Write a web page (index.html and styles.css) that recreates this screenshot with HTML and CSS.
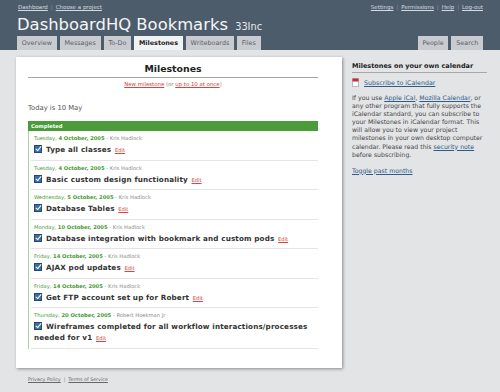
FILE: index.html
```html
<!DOCTYPE html>
<html>
<head>
<meta charset="utf-8">
<link rel="stylesheet" href="styles.css">
</head>
<body>
<div class="header">
  <div class="topbar">
    <div class="crumbs"><a href="#">Dashboard</a><span class="sep">|</span><a href="#">Choose a project</a></div>
    <div class="account"><a href="#">Settings</a><span class="sep">|</span><a href="#">Permissions</a><span class="sep">|</span><a href="#">Help</a><span class="sep">|</span><a href="#">Log-out</a></div>
  </div>
  <h1 class="title">DashboardHQ Bookmarks <span class="company">33Inc</span></h1>
  <div class="tabs">
    <div class="tab-group">
      <a class="tab" href="#">Overview</a>
      <a class="tab" href="#">Messages</a>
      <a class="tab" href="#">To-Do</a>
      <a class="tab active" href="#">Milestones</a>
      <a class="tab" href="#">Writeboards</a>
      <a class="tab" href="#">Files</a>
    </div>
    <div class="tab-group">
      <a class="tab" href="#">People</a>
      <a class="tab" href="#">Search</a>
    </div>
  </div>
</div>

<div class="page">
  <div class="main">
    <h2 class="page-title">Milestones</h2>
    <div class="new-links"><a href="#">New milestone</a> (or <a href="#">up to 10 at once</a>)</div>
    <p class="today">Today is 10 May</p>

    <div class="section-bar">Completed</div>
    <ul class="milestones">
      <li class="ms">
        <div class="ms-date">Tuesday, <b>4 October, 2005</b> <span class="who">- Kris Hadlock</span></div>
        <div class="ms-title"><span class="check"></span>Type all classes <a class="edit" href="#">Edit</a></div>
      </li>
      <li class="ms">
        <div class="ms-date">Tuesday, <b>4 October, 2005</b> <span class="who">- Kris Hadlock</span></div>
        <div class="ms-title"><span class="check"></span>Basic custom design functionality <a class="edit" href="#">Edit</a></div>
      </li>
      <li class="ms">
        <div class="ms-date">Wednesday, <b>5 October, 2005</b> <span class="who">- Kris Hadlock</span></div>
        <div class="ms-title"><span class="check"></span>Database Tables <a class="edit" href="#">Edit</a></div>
      </li>
      <li class="ms">
        <div class="ms-date">Monday, <b>10 October, 2005</b> <span class="who">- Kris Hadlock</span></div>
        <div class="ms-title"><span class="check"></span>Database integration with bookmark and custom pods <a class="edit" href="#">Edit</a></div>
      </li>
      <li class="ms">
        <div class="ms-date">Friday, <b>14 October, 2005</b> <span class="who">- Kris Hadlock</span></div>
        <div class="ms-title"><span class="check"></span>AJAX pod updates <a class="edit" href="#">Edit</a></div>
      </li>
      <li class="ms">
        <div class="ms-date">Friday, <b>14 October, 2005</b> <span class="who">- Kris Hadlock</span></div>
        <div class="ms-title"><span class="check"></span>Get FTP account set up for Robert <a class="edit" href="#">Edit</a></div>
      </li>
      <li class="ms">
        <div class="ms-date">Thursday, <b>20 October, 2005</b> <span class="who">- Robert Hoekman Jr</span></div>
        <div class="ms-title"><span class="check"></span>Wireframes completed for all workflow interactions/processes needed for v1 <a class="edit" href="#">Edit</a></div>
      </li>
    </ul>
  </div>

  <div class="sidebar">
    <h3 class="side-title">Milestones on your own calendar</h3>
    <div class="subscribe">
      <svg class="ical" width="7" height="9" viewBox="0 0 7 9"><rect x="0.5" y="0.5" width="6" height="8" fill="#fff" stroke="#b9b9b9"/><rect x="0.5" y="0.5" width="6" height="3" fill="#c0303a"/></svg>
      <a href="#">Subscribe to iCalendar</a>
    </div>
    <p class="side-text">If you use <a href="#">Apple iCal</a>, <a href="#">Mozilla Calendar</a>, or any other program that fully supports the iCalendar standard, you can subscribe to your Milestones in iCalendar format. This will allow you to view your project milestones in your own desktop computer calendar. Please read this <a href="#">security note</a> before subscribing.</p>
    <p class="side-toggle"><a href="#">Toggle past months</a></p>
  </div>
</div>

<div class="footer"><a href="#">Privacy Policy</a><span class="sep">|</span><a href="#">Terms of Service</a></div>
</body>
</html>
```

FILE: styles.css
```css
html, body {
  margin: 0;
  padding: 0;
}
body {
  background: #e3e4e6;
  font-family: "DejaVu Sans", Verdana, sans-serif;
  color: #333;
  width: 500px;
  height: 392px;
  overflow: hidden;
}
a { color: inherit; }

.header {
  background: #4d5c6b;
  padding: 0 17px;
  height: 50px;
  display: flex;
  flex-direction: column;
}
.topbar {
  display: flex;
  justify-content: space-between;
  font-size: 5.5px;
  color: #aab3bc;
  padding-top: 4px;
  height: 7px;
}
.topbar a { color: #d5dbe0; }
.topbar .sep { margin: 0 3px; color: #8a96a2; }
.crumbs { padding-left: 1px; }

.title {
  margin: 4px 0 0 0;
  font-weight: normal;
  font-size: 16.4px;
  color: #f4f6f8;
  height: 20px;
  line-height: 20px;
}
.company {
  font-size: 9.8px;
  color: #e6e9ec;
  margin-left: 2px;
}

.tabs {
  margin-top: auto;
  display: flex;
  justify-content: space-between;
}
.tab-group {
  display: flex;
  gap: 3px;
}
.tab {
  display: block;
  height: 14px;
  line-height: 14px;
  padding: 0 4.8px;
  background: #c8ccd1;
  color: #5a5f66;
  text-decoration: none;
  font-size: 6.4px;
}
.tab.active {
  background: #f1f2f3;
  color: #222;
  font-weight: bold;
}

.page {
  display: flex;
  align-items: flex-start;
  padding: 7px 0 0 16px;
}
.main {
  background: #fff;
  width: 290px;
  height: 311px;
  padding: 0 24px 0 12px;
  box-shadow: 1px 1px 3px rgba(0,0,0,0.4);
  box-sizing: content-box;
  flex: none;
}
.page-title {
  margin: 0;
  padding-top: 4px;
  font-size: 9.4px;
  text-align: center;
  color: #222;
  height: 16px;
  line-height: 16px;
  border-bottom: 1.5px solid #a5a5a5;
}
.new-links {
  text-align: center;
  font-size: 5.4px;
  color: #888;
  margin-top: 3px;
}
.new-links a { color: #e0403a; }
.today {
  margin: 17px 0 0 0;
  font-size: 6.8px;
  color: #555;
}

.section-bar {
  margin-top: 9px;
  background: #4a9c3a;
  color: #fff;
  font-weight: bold;
  font-size: 5.2px;
  height: 10px;
  line-height: 10px;
  padding-left: 3px;
}
.milestones {
  list-style: none;
  margin: 0;
  padding: 0 0 0 2px;
  border-left: 1px solid #a8d39b;
}
.ms {
  padding: 4px 0 3.5px 3px;
  border-bottom: 1px solid #e4e4e4;
  min-height: 20px;
}
.ms-date {
  font-size: 5.2px;
  color: #3f9a32;
  height: 7px;
  line-height: 7px;
}
.ms-date .who { color: #888; }
.ms-title {
  font-size: 7.2px;
  font-weight: bold;
  color: #333;
  line-height: 11px;
  margin-top: 2px;
  letter-spacing: 0.15px;
}
.check {
  display: inline-block;
  width: 6px;
  height: 6px;
  background: #3b6ea5;
  border: 1px solid #24496f;
  margin-right: 4px;
  position: relative;
  vertical-align: -1px;
}
.check::after {
  content: "";
  position: absolute;
  left: 2px;
  top: -1px;
  width: 2px;
  height: 5px;
  border: solid #fff;
  border-width: 0 1px 1px 0;
  transform: rotate(40deg);
}
.edit {
  color: #e0403a;
  font-size: 5.2px;
  font-weight: normal;
  letter-spacing: 0;
  margin-left: 1px;
}

.sidebar {
  width: 135px;
  margin-left: 10px;
  padding-top: 5px;
  font-size: 6.2px;
  color: #444;
  flex: none;
}
.side-title {
  margin: 0;
  font-size: 6.5px;
  font-weight: bold;
  color: #222;
  padding-bottom: 2px;
  border-bottom: 1px solid #a8a8a8;
  line-height: 8px;
}
.subscribe {
  display: flex;
  align-items: center;
  gap: 5px;
  margin-top: 5px;
  font-size: 6.3px;
}
.sidebar a { color: #2d5b8a; }
.side-text {
  margin: 7px 0 0 0;
  line-height: 8.1px;
}
.side-toggle {
  margin: 8px 0 0 0;
}

.footer {
  padding: 9px 0 0 28px;
  font-size: 4.8px;
  color: #888;
}
.footer a { color: #666; }
.footer .sep { margin: 0 3px; }
```
